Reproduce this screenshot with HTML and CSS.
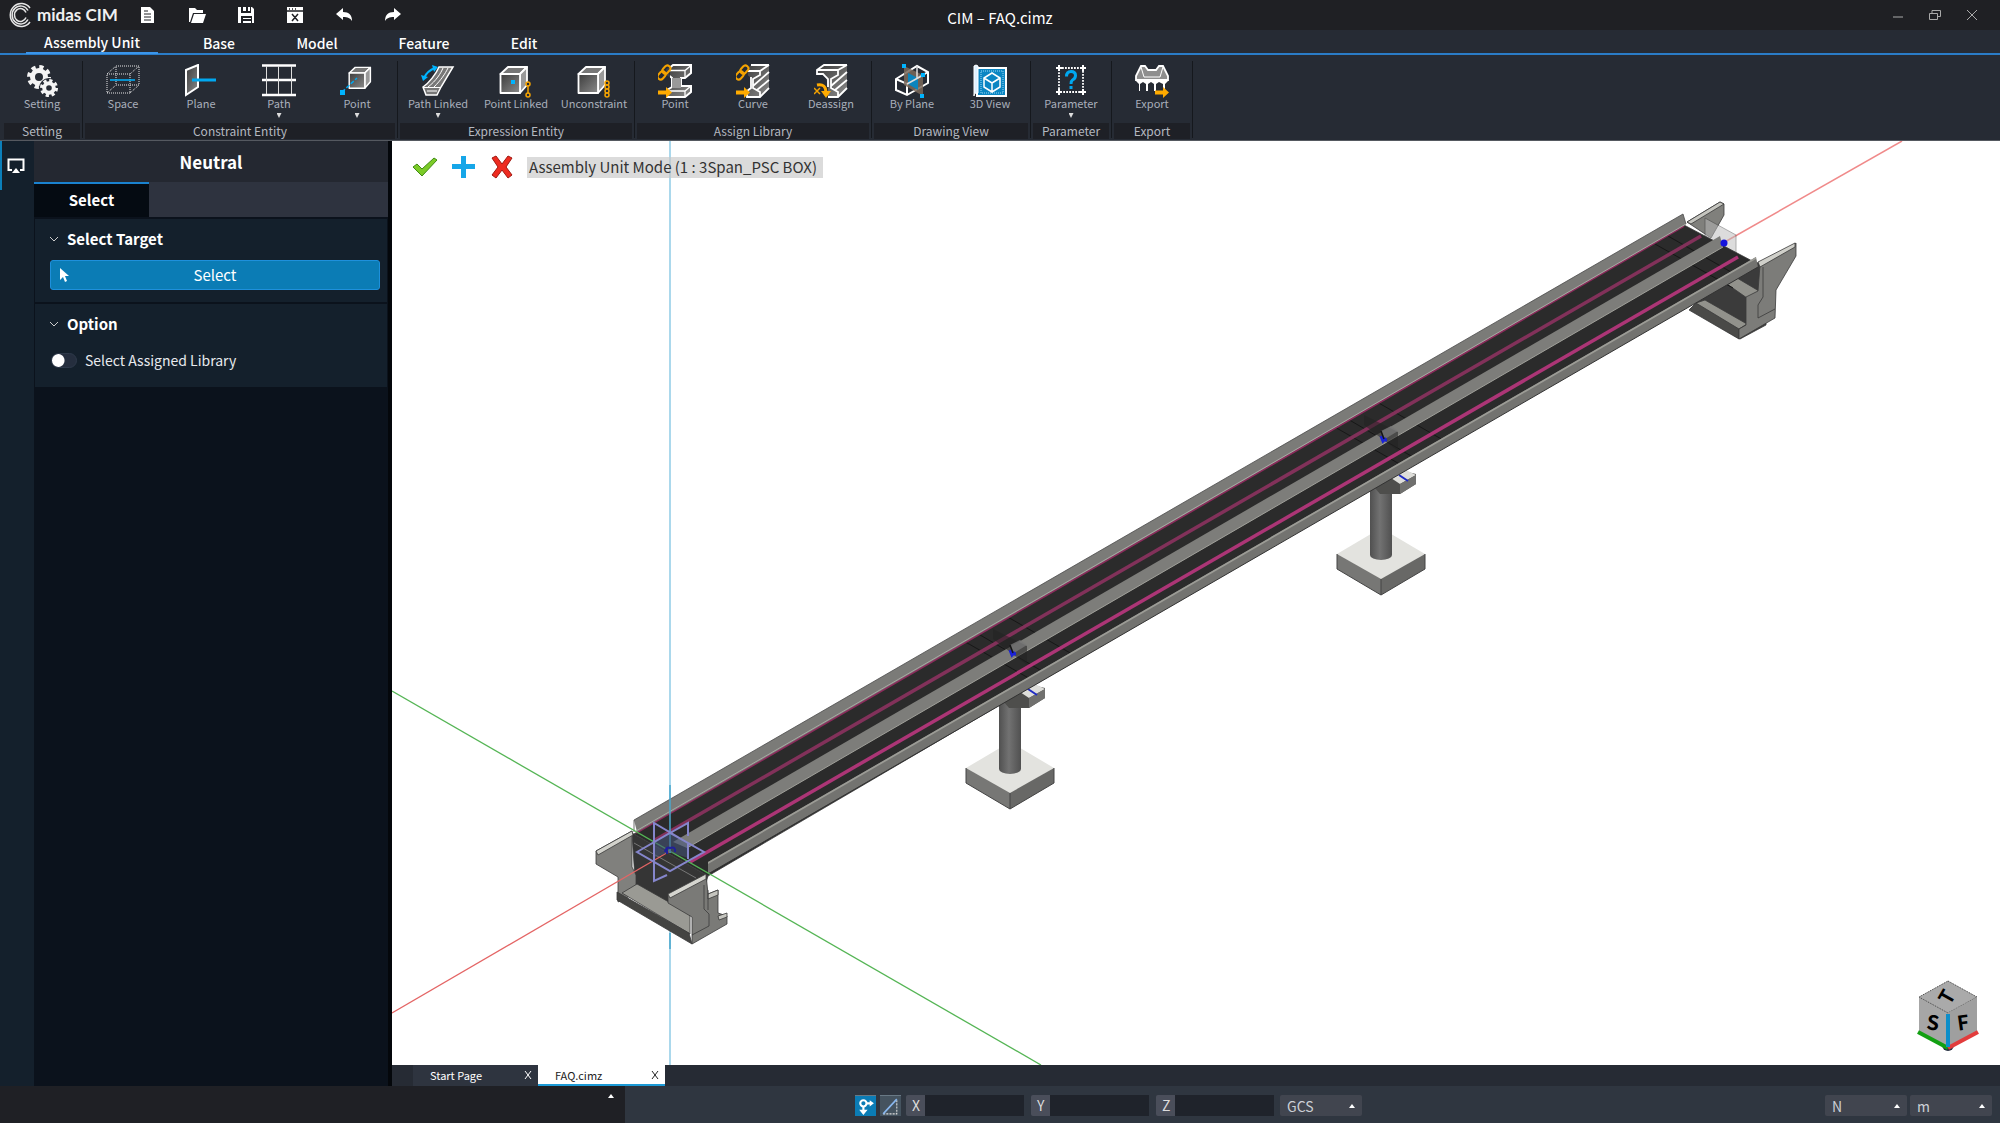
FILE: index.html
```html
<!DOCTYPE html>
<html lang="en">
<head>
<meta charset="utf-8">
<title>CIM – FAQ.cimz</title>
<link rel="stylesheet" href="styles.css">
</head>
<body>
<svg class="defs" aria-hidden="true">
  <defs>
    <linearGradient id="steel" x1="0" y1="0" x2="1" y2="1"><stop offset="0" stop-color="#3c3c3c"/><stop offset="1" stop-color="#8a8a8a"/></linearGradient>
    <linearGradient id="column" x1="0" y1="0" x2="1" y2="0"><stop offset="0" stop-color="#505050"/><stop offset=".45" stop-color="#727272"/><stop offset="1" stop-color="#505050"/></linearGradient>
    <g id="cubebox" stroke="#fff" stroke-width="1.8" stroke-linejoin="round">
      <path d="M1.500 10 9 3h19l-7 7z" fill="#777"/><path d="M21 10l7-7v18l-7 8z" fill="#999"/><path d="M1.500 10H21v19H1.500z" fill="url(#steel)"/>
    </g>
    <g id="arrow"><path d="M0 26.500h8V23l6 5.500L8 34v-3.500H0z" fill="#ffab00"/></g>
    <g id="link" fill="none" stroke="#f5a300" stroke-width="2"><rect x="-1" y="8" width="9" height="6" rx="3" transform="rotate(-48 4 11)"/><rect x="4" y="3" width="9" height="6" rx="3" transform="rotate(-48 8 6)"/></g>
    <g id="pier">
      <path d="M966 768l44-26 44 26-44 26z" fill="#e3e3df"/>
      <path d="M966 768v15l44 26v-16z" fill="#777775"/>
      <path d="M1010 793v16l44-26v-15z" fill="#686866"/>
      <path d="M966 768v15l44 26 44-26v-15M1010 793v16" fill="none" stroke="#444"/>
      <path d="M999 690h22v79a11 5 0 0 1-22 0z" fill="url(#column)"/>
      <path d="M998 695l22-13 25 6v10l-16 10h-20z" fill="#4e4e4c"/>
      <path d="M1020 692l15-8 10 5-16 9z" fill="#dededa"/>
      <path d="M1029 698l16-9v9l-16 10z" fill="#70706e"/>
      <path d="M1028 689l9 6" stroke="#1f2bc4" stroke-width="2"/>
    </g>
    <g id="seams" stroke="#171717" fill="none"><path d="M962 640l70 40M975 632l72 42M1006 616l66 38"/></g>
    <g id="joint">
      <path d="M993 629v10l34 26v-19z" fill="#222" opacity=".55"/>
      <path d="M1010 645l10-5 7 5-13 8z" fill="#777" opacity=".8"/>
      <path d="M1010 650l2 5 3-3M1011 654h5" stroke="#1a22d8" stroke-width="3" fill="none"/>
      <path d="M1010 645l3 8" stroke="#161616" stroke-width="1.500"/>
    </g>
  </defs>
</svg>

<header class="titlebar">
  <div class="brand">
    <svg width="24" height="26" viewBox="0 0 24 26" fill="none" stroke="#e6e6e6" stroke-width="1.500">
      <path d="M22 6A11 11.500 0 1 0 22 20"/><path d="M20 8.500A8.500 9 0 1 0 20 17.500"/><path d="M18 10.500A6 6.500 0 1 0 18 15.500"/>
    </svg>
    <span>midas CIM</span>
  </div>
  <nav class="quick" aria-label="Quick access">
    <button aria-label="New"><svg viewBox="0 0 18 18"><path fill="#fff" d="M2 1h9l4 4v12H2z"/><path d="M5 5h4M5 8h7M5 11h7M5 14h7" stroke="#1f2024"/></svg></button>
    <button aria-label="Open"><svg viewBox="0 0 18 18"><path fill="#fff" d="M1 2h6l2 2h6v3H5l-3 9H1zM6 8h12l-3 9H3z"/></svg></button>
    <button aria-label="Save"><svg viewBox="0 0 18 18"><path fill="#fff" d="M1 1h3v6h10V1h1l2 2v14h-2v-7H4v7H1zM6 1h3v4H6zM11 1h2v4h-2zM6 12h8v1H6zM6 15h8v2H6z"/></svg></button>
    <button aria-label="Close file"><svg viewBox="0 0 18 18"><path fill="#fff" d="M1 1h16v16H1z"/><path d="M1 5h16M3 3h1M6 3h1M9 3h1M6 8l6 7M12 8l-6 7" stroke="#1f2024" stroke-width="1.500"/></svg></button>
    <button aria-label="Undo"><svg viewBox="0 0 18 18"><path fill="#fff" d="M1 8l7-6v4c6 0 9 3 9 9-2-3-4-4-9-4v3z"/></svg></button>
    <button aria-label="Redo"><svg viewBox="0 0 18 18"><path fill="#fff" d="M17 8l-7-6v4c-6 0-9 3-9 9 2-3 4-4 9-4v3z"/></svg></button>
  </nav>
  <h1>CIM – FAQ.cimz</h1>
  <div class="window">
    <button aria-label="Minimize"><svg viewBox="0 0 12 12"><path d="M1 8h10"/></svg></button>
    <button aria-label="Restore"><svg viewBox="0 0 12 12"><path d="M.5 4.500h8v6h-8zM3 4V1.500h8.500v6H9"/></svg></button>
    <button aria-label="Close"><svg viewBox="0 0 12 12"><path d="M1 1l10 10M11 1L1 11"/></svg></button>
  </div>
</header>

<nav class="menu">
  <button class="active">Assembly Unit</button><button>Base</button><button>Model</button><button>Feature</button><button>Edit</button>
</nav>

<div class="ribbon">
  <section class="group">
    <div class="tools">
      <button><svg viewBox="0 0 34 34"><g fill="none" stroke="#f4f4f4"><circle cx="14" cy="13" r="6.500" stroke-width="5"/><circle cx="14" cy="13" r="10" stroke-width="4" stroke-dasharray="4.200 3.650"/></g><circle cx="24" cy="24" r="10" fill="#262b34"/><g fill="none" stroke="#f4f4f4"><circle cx="24" cy="24" r="4.800" stroke-width="4"/><circle cx="24" cy="24" r="7.500" stroke-width="3" stroke-dasharray="3.200 2.690"/></g></svg><span>Setting</span></button>
    </div>
    <h2>Setting</h2>
  </section>
  <section class="group">
    <div class="tools">
      <button><svg viewBox="0 0 34 34" fill="none"><path d="M1 10h23v19H1zM10 2h23v19H10zM1 10l9-8M24 10l9-8M24 29l9-8M1 29l9-8" stroke="#e8e8e8" stroke-dasharray="1 1"/><path d="M4 16h25" stroke="#00b4ff" stroke-width="1.500"/></svg><span>Space</span></button>
      <button><svg viewBox="0 0 34 34"><path d="M2 6l12-5v22L2 31z" fill="url(#steel)" stroke="#fff" stroke-width="2"/><path d="M8 16h24" stroke="#00a8f0" stroke-width="3"/></svg><span>Plane</span></button>
      <button><svg viewBox="0 0 34 34"><path d="M0 1.500h34M0 16h34M0 31h34" stroke="#fff" stroke-width="2.500"/><path d="M4.500 2v28M16.500 2v28M29.500 2v28" stroke="#ddd"/></svg><span>Path</span><i></i></button>
      <button><svg viewBox="0 0 34 34"><g transform="translate(8 1) scale(.8)"><use href="#cubebox"/></g><path d="M2 28l15-14" stroke="#00a8f0" stroke-width="1.500" stroke-dasharray="4 2"/><path d="M0 26h5v5H0z" fill="#00b4ff"/></svg><span>Point</span><i></i></button>
    </div>
    <h2>Constraint Entity</h2>
  </section>
  <section class="group">
    <div class="tools">
      <button><svg viewBox="0 0 34 34"><path d="M18 3h14L20 23l-4 8H5l-3-8C8 19 15 10 18 3z" fill="#777" stroke="#fff" stroke-width="1.500"/><path d="M7 23C15 17 20 9 22 4M13 23C20 16 24 10 27 4M2 23.500h18M6 27h10" stroke="#fff" fill="none"/><path d="M3 14Q6 7 14 4" stroke="#00b4ff" stroke-width="2" fill="none"/><path d="M0 11l2 6 5-4zM11 1l6 2-4 5z" fill="#00b4ff"/></svg><span>Path Linked</span><i></i></button>
      <button><svg viewBox="0 0 34 34"><use href="#cubebox"/><path d="M12 16h4v4h-4z" fill="#00b4ff"/><g fill="#262b34" stroke="#f5a300" stroke-width="1.500"><path d="M29 21v9"/><circle cx="29" cy="20" r="2"/><circle cx="29" cy="31" r="2"/></g></svg><span>Point Linked</span></button>
      <button><svg viewBox="0 0 34 34"><use href="#cubebox"/><g fill="#262b34" stroke="#f5a300" stroke-width="1.500"><circle cx="30" cy="19" r="2"/><circle cx="30" cy="23" r="2"/><circle cx="30" cy="27" r="2"/><circle cx="30" cy="31" r="2"/></g></svg><span>Unconstraint</span></button>
    </div>
    <h2>Expression Entity</h2>
  </section>
  <section class="group">
    <div class="tools">
      <button><svg viewBox="0 0 34 34"><path d="M9 6l6-5h18v8l-6 5h-4v8h10v6l-6 5H9v-7l5-3V14l-5-4z" fill="url(#steel)" stroke="#fff" stroke-width="2"/><path d="M14 14h9v10h-9z" fill="#999"/><path d="M9 6.500h18l6-5M27 7v7M9 27h18l6-5M27 27v6" stroke="#fff" stroke-width="1.300" fill="none"/><path d="M0 0h12v14H0z" fill="#262b34" opacity=".9"/><use href="#link"/><use href="#arrow"/></svg><span>Point</span></button>
      <button><svg viewBox="0 0 34 34"><path d="M9 7l6-6h18v23l-9 9H11v-6l3-2V13L9 9z" fill="url(#steel)"/><path d="M33 1H15M10 7h14l9-6M24 7v4l-7 4v9l7 4v5M33 8L17 22M33 16L21 26M33 24l-9 9H11v-6l4-3V13" stroke="#fff" stroke-width="1.800" fill="none"/><path d="M0 0h12v13H0z" fill="#262b34" opacity=".9"/><use href="#link"/><use href="#arrow"/></svg><span>Curve</span></button>
      <button><svg viewBox="0 0 34 34"><path d="M3 6l7-5h23v23l-9 9H14v-8l-2-14H3z" fill="url(#steel)"/><path d="M33 1H10L3 6v4h6l5 5v8M3 6h21l9-5M24 6v5l-7 4v9l7 4v5M33 8L17 22M33 16L21 26M33 24l-9 9H14" stroke="#fff" stroke-width="1.800" fill="none"/><path d="M0 24l6 6M6 24l-6 6" stroke="#f5a300" stroke-width="1.500"/><path d="M3 21q9-2 9 8" stroke="#ffab00" stroke-width="3" fill="none"/><path d="M7 27h10l-5 7z" fill="#ffab00"/></svg><span>Deassign</span></button>
    </div>
    <h2>Assign Library</h2>
  </section>
  <section class="group">
    <div class="tools">
      <button><svg viewBox="0 0 34 34"><path d="M1 15L22 2l11 6v11L12 31 1 26zM1 15l11 5L33 8M12 20v11" fill="none" stroke="#fff" stroke-width="2"/><path d="M9 2l19 9v21L9 21z" fill="#7a6a5c" opacity=".85"/><path d="M13 9l10 5v12l-10-6z" fill="#0a84bd"/><path d="M12 20L30 10M22 2v12" stroke="#ddd" stroke-width="1.500"/><path d="M7 0h4v4H7zM26 9h4v4h-4zM25 30h4v4h-4z" fill="#00b4ff"/></svg><span>By Plane</span></button>
      <button><svg viewBox="0 0 34 34"><path d="M4 4h29v28H4z" fill="#0b86c3" stroke="#fff" stroke-width="2"/><path d="M8 7h22v22H8z" fill="none" stroke="#9bd8f5" stroke-dasharray="1 1"/><path d="M1 2q2-2 4 0v27H3q-2 0-2 3z" fill="#dff1ff" stroke="#fff"/><path d="M19 9l8 5v9l-8 5-8-5v-9zM11 14l8 5 8-5M19 19v9" fill="none" stroke="#fff" stroke-width="1.500"/></svg><span>3D View</span></button>
    </div>
    <h2>Drawing View</h2>
  </section>
  <section class="group">
    <div class="tools">
      <button><svg viewBox="0 0 34 34"><path d="M5 4h24v24H5z" fill="none" stroke="#fff" stroke-width="1.800" stroke-dasharray="1.800 1.200"/><path d="M2 4h6M5 1v6M26 4h6M29 1v6M2 28h6M5 25v6M26 28h6M29 25v6" stroke="#fff" stroke-width="2"/><path d="M12.500 12.500q0-5 4.500-5t4.500 4q0 3-3 4.500-1.500 1-1.500 4M17 22v3" fill="none" stroke="#00a8f0" stroke-width="3"/></svg><span>Parameter</span><i></i></button>
    </div>
    <h2>Parameter</h2>
  </section>
  <section class="group">
    <div class="tools">
      <button><svg viewBox="0 0 34 34"><path d="M1 12L6 2h4l3 4h8l3-4h4l5 10v4H1z" fill="#8e8e8e" stroke="#fff" stroke-width="1.800"/><path d="M6 3l3 10h16l3-10M1 16h32" stroke="#fff" fill="none"/><path d="M1 17h32l-3 3v7h-2v-7l-4-2-3 2v7h-2v-7l-3-2-3 2v7h-2v-7l-3-2-3 2v7H4v-7z" fill="#fff"/><use href="#arrow" x="20"/></svg><span>Export</span></button>
    </div>
    <h2>Export</h2>
  </section>
</div>

<main class="work">
  <nav class="rail"><button aria-label="Display"><svg width="18" height="16" viewBox="0 0 18 16"><path d="M5 12H1.500V1.500h15V12H13" fill="none" stroke="#fff" stroke-width="2"/><path d="M5 15l4-5 4 5z" fill="#fff"/></svg></button></nav>
  <aside class="panel">
    <h2>Neutral</h2>
    <div class="paneltabs"><button>Select</button></div>
    <section class="block">
      <h3><svg viewBox="0 0 8 6"><path d="M0 1l4 4 4-4"/></svg>Select Target</h3>
      <button class="pick"><svg width="12" height="16" viewBox="0 0 12 16"><path d="M1 1v12l3-3 2 5 2-1-2-5h4z" fill="#fff"/></svg><span>Select</span></button>
    </section>
    <section class="block">
      <h3><svg viewBox="0 0 8 6"><path d="M0 1l4 4 4-4"/></svg>Option</h3>
      <label class="toggle"><input type="checkbox">Select Assigned Library</label>
    </section>
  </aside>

  <div class="stage">
    <div class="canvas">
      <svg class="scene" viewBox="392 141 1608 924" preserveAspectRatio="xMinYMin slice">
        <path d="M670 141v924" stroke="#8fcbe6" stroke-width="1.500"/>
        <path d="M1723 243L1902 141" stroke="#f08a8a" stroke-width="1.500"/>
        <use href="#pier"/><use href="#pier" x="371" y="-214"/>
        <g stroke="#3a3a3a" stroke-width=".8" stroke-linejoin="round">
          <path d="M1687 222l33-20 4 2v11l-13 23z" fill="#80807c"/>
          <path d="M1687 222l33-20 4 2-33 20z" fill="#c5c5bf"/>
          <path d="M1705 218l31 17v18l-31-17z" fill="#bbb" opacity=".5"/>
          <path d="M1690 309l8-7 50-35 18-8v66l-26 14z" fill="#3b3b3b"/>
          <path d="M1689 310l8-8 42 25v12z" fill="#4a4a48"/>
          <path d="M1696 303l9-3 42 24-8 5z" fill="#92928c"/>
          <path d="M1727 284l10-6 22 13-1 4-11 3z" fill="#92928c"/>
          <path d="M1746 297l12-6 2-26 36-22v13l-20 34-1 28-36 21v-10l7-4z" fill="#7c7c79"/>
          <path d="M1758 262l37-19v4l-35 20z" fill="#d0d0ca"/>
          <path d="M1763 267v30l-5 8v13l17-9" fill="none"/>
          <path d="M634 834L1684 225l72 38-48 27L708 876z" fill="#2b2b2b"/>
        </g>
        <g fill="none">
          <use href="#seams"/><use href="#seams" x="371" y="-214"/>
          <path d="M1655 244l78 44M1668 236l70 40" stroke="#171717"/>
          <path d="M636 833L1684 226" stroke="#8c2b5c" stroke-width="2"/>
          <path d="M655 840L1701 236" stroke="#82315a" stroke-width="3.500"/>
          <path d="M690 862L1738 257" stroke="#ac3576" stroke-width="3.500"/>
        </g>
        <path d="M673 842L1720 236l3 11L687 848z" fill="#7d7d7a"/>
        <path d="M687 848L1723 247" stroke="#a0a09a"/>
        <path d="M634 820L1683 214l3 10L637 832z" fill="#7b7b78"/>
        <path d="M636 831L1686 224" stroke="#a8a8a2"/>
        <path d="M634 832v-12L1683 214l3 10" fill="none" stroke="#4a4a4a" stroke-width=".8"/>
        <path d="M708 862L1756 257l2 10L708 874z" fill="#737370"/>
        <path d="M708 862L1756 257v2L708 864z" fill="#9c9c96"/>
        <path d="M708 874L1758 267" stroke="#333" fill="none"/>
        <use href="#joint"/><use href="#joint" x="371" y="-214"/>
        <circle cx="1724" cy="243" r="3.500" fill="#1514dd"/>
        <g stroke="#3a3a3a" stroke-width=".8" stroke-linejoin="round">
          <path d="M632 833l76 43-3 10-35 22v8l-34-20z" fill="#353535"/>
          <path d="M596 851l36-20v36l4 8v18l-18 9v-25l-22-13z" fill="#80807d"/>
          <path d="M596 851l36-20 1 4-35 20z" fill="#d2d2cc"/>
          <path d="M622 893l15-9 53 30v20z" fill="#9a9a94"/>
          <path d="M617 892l72 41 3 11-75-44z" fill="#444442"/>
          <path d="M668 894l38-20 2 20 10-4v23l9 3v8l-35 20v-27l-24-14z" fill="#7a7a77"/>
          <path d="M668 894l38-20v5l-36 19z" fill="#d5d5cf"/>
          <path d="M708 894l10-4v5l-10 4zM718 916l9-3v4l-8 3z" fill="#c5c5bf"/>
          <path d="M704 885v24l5 5v12l-17 9M708 890v20" fill="none"/>
        </g>
        <path d="M634 843l62 35" stroke="#777" fill="none"/>
        <path d="M392 691l649 374" stroke="#55b555" stroke-width="1.300"/>
        <path d="M392 1013l278-162" stroke="#e46565" stroke-width="1.300"/>
        <path d="M670 785v68M670 933v16" stroke="#4aa6cc" stroke-width="1.500"/>
        <g fill="none" stroke="#8586cc" stroke-width="2">
          <path d="M653 843l17-10 18 10v15l-18-6-17 6z" fill="#45557c" stroke="none" opacity=".55"/>
          <path d="M637 852l33-19 34 19-34 19zM667 875l-13 6v-58l34 20M688 836v-13l-34 19M688 843v16"/>
        </g>
        <path d="M665 852q1-6 5-4 6-2 5 4M667 848v6" stroke="#20209c" stroke-width="2" fill="none"/>
      </svg>
      <div class="mode">
        <button aria-label="Apply"><svg width="26" height="20" viewBox="0 0 26 20"><path d="M1 10l4-3 5 5L22 1l3 2-15 16z" fill="#7ccb28" stroke="#3f8b12"/></svg></button>
        <button aria-label="Add"><svg width="26" height="24" viewBox="0 0 26 24"><path d="M10 1h5v8h9v5h-9v9h-5v-9H1V9h9z" fill="#16a6e8"/></svg></button>
        <button aria-label="Cancel"><svg width="24" height="24" viewBox="0 0 24 24"><path d="M2 3l4-2 6 8 6-8 4 2-6 9 6 8-4 3-6-8-6 8-4-3 6-8z" fill="#ee2b20" stroke="#a01810"/></svg></button>
        <output>Assembly Unit Mode (1 : 3Span_PSC BOX)</output>
      </div>
      <svg class="viewcube" width="64" height="74" viewBox="0 0 64 74">
        <circle cx="32" cy="66" r="6" fill="#273142"/>
        <path d="M32 2l29 16v35L32 69 3 53V18z" fill="#a6a6a6"/><path d="M32 2l29 16-29 16L3 18z" fill="#aaa" stroke="#444" stroke-dasharray="1 1"/>
        <path d="M32 34l29-16v35L32 69z" fill="#9f9f9f"/>
        <path d="M2 53l30 16" stroke="#12a012" stroke-width="4"/><path d="M62 53L32 69" stroke="#e23c3c" stroke-width="4"/><path d="M32 35v33" stroke="#0d8ec9" stroke-width="4"/>
        <text x="17" y="51" transform="rotate(8 17 43)">S</text><text x="47" y="51" transform="rotate(-8 47 43)">F</text><text x="31" y="25" transform="rotate(-60 31 18)">T</text>
      </svg>
    </div>
    <div class="doctabs">
      <button>Start Page<svg viewBox="0 0 8 8"><path d="M1 0l6 8M7 0L1 8"/></svg></button>
      <button class="current">FAQ.cimz<svg viewBox="0 0 8 8"><path d="M1 0l6 8M7 0L1 8"/></svg></button>
    </div>
  </div>
</main>

<footer class="status">
  <div class="log"><button aria-label="Expand log"></button></div>
  <form class="coords">
    <button type="button" class="snap on" aria-label="Snap"><svg viewBox="0 0 20 20"><g fill="none" stroke="#fff" stroke-width="2"><circle cx="8" cy="7" r="3"/><path d="M8 10v5M11 7h4"/></g><path d="M14 4l4 3-4 3zM4 13h8l-4 5z" fill="#fff"/></svg></button>
    <button type="button" class="snap" aria-label="Angle"><svg viewBox="0 0 20 20" fill="none"><path d="M3 17h13V4" stroke="#ddd" stroke-dasharray="2 1"/><path d="M3 17L16 3" stroke="#8ab8f0" stroke-width="1.500"/></svg></button>
    <label>X<input type="text"></label><label>Y<input type="text"></label><label>Z<input type="text"></label>
    <span class="drop"><select aria-label="Coordinate system"><option>GCS</option></select></span>
  </form>
  <div class="units">
    <span class="drop"><select aria-label="Force unit"><option>N</option></select></span>
    <span class="drop"><select aria-label="Length unit"><option>m</option></select></span>
  </div>
</footer>
</body>
</html>
```
FILE: styles.css
```css
* { box-sizing: border-box; }
body {
  margin: 0;
  height: 100vh;
  display: flex;
  flex-direction: column;
  background: #262b34;
  color: #fff;
  font-family: "Noto Sans CJK KR", "Noto Sans", sans-serif;
  font-size: 14px;
  line-height: 20px;
}
button, input, select { font: inherit; color: inherit; border: 0; padding: 0; margin: 0; background: none; }
h1, h2, h3 { margin: 0; font-weight: 400; font-size: inherit; }
svg { display: block; flex: none; }
.defs { position: absolute; width: 0; height: 0; }

.titlebar { display: grid; grid-template-columns: 139px 1fr auto 1fr 139px; align-items: center; height: 30px; background: #1f2024; }
.brand { display: flex; align-items: center; gap: 5px; padding-left: 8px; font-family: Lato, sans-serif; font-weight: 700; font-size: 17px; color: #f0f0f0; }
.quick { display: flex; gap: 31px; }
.quick button { width: 18px; height: 18px; }
.titlebar h1 { font-size: 15px; padding-top: 5px; }
.window { grid-column: 5; display: flex; justify-content: flex-end; gap: 25px; padding-right: 22px; }
.window button { width: 12px; height: 12px; }
.window path { fill: none; stroke: #aaa; stroke-width: 1; }

.menu { display: flex; height: 25px; padding-left: 26px; border-bottom: 2px solid #2a7cc7; }
.menu button { width: 98px; padding-top: 2px; font-size: 14px; font-weight: 500; line-height: 20px; height: 24px; }
.menu .active { width: 132px; border-bottom: 2px solid #3a95ea; }
.menu .active + button { margin-left: 12px; }
.menu button:nth-child(4) { width: 116px; }
.menu button:nth-child(5) { width: 84px; }

.ribbon { display: flex; height: 86px; padding: 6px 0 2px 2px; border-bottom: 1px solid #555960; }
.group { display: flex; flex-direction: column; justify-content: space-between; padding: 0 1px; border-right: 1px solid #15181d; }
.tools { display: flex; }
.tools button { width: 78px; height: 62px; padding-top: 3px; display: flex; flex-direction: column; align-items: center; font-size: 11px; line-height: 11px; color: #a9afbb; }
.tools svg { width: 34px; height: 34px; }
.tools i { width: 5px; height: 5px; margin-top: 4px; background: #ddd; clip-path: polygon(0 0, 100% 0, 50% 100%); }
.group h2 { margin: 0 1px; height: 16px; line-height: 16px; font-size: 12px; text-align: center; color: #b4b8c0; background: #1e2026; }

.work { flex: 1; min-height: 0; display: flex; }
.rail { width: 34px; background: #14202c; }
.rail button { width: 100%; height: 49px; padding-left: 5px; border-left: 2px solid #0b7fba; }
.panel { width: 358px; background: #0b121c; border-right: 4px solid #04070b; }
.panel h2 { height: 41px; line-height: 42px; font-size: 17px; font-weight: 700; text-align: center; background: #242831; }
.paneltabs { height: 35px; background: #2e333f; }
.paneltabs button { width: 115px; height: 35px; padding-bottom: 2px; background: #050b12; border-top: 2px solid #1a82cf; font-size: 15px; font-weight: 700; }
.block { height: 83px; margin: 2px 1px 0; padding: 10px 7px 0 15px; background: #14202c; }
.block h3 { display: flex; align-items: center; gap: 9px; font-size: 15px; font-weight: 700; }
.block h3 svg { width: 8px; height: 6px; overflow: visible; fill: none; stroke: #ccc; stroke-width: 1; }
.pick { display: grid; grid-template-columns: 12px 1fr 12px; align-items: center; width: 100%; height: 30px; margin-top: 11px; padding: 0 8px; border: 1px solid #1e90dc; border-radius: 3px; background: #0b7cb5; font-size: 15px; line-height: 18px; }
.toggle { display: flex; align-items: center; gap: 8px; margin-top: 16px; padding-left: 1px; font-size: 14px; line-height: 20px; color: #e8eaee; }
.toggle input { appearance: none; width: 26px; height: 15px; border-radius: 8px; border: 1px solid #2e394a; background: radial-gradient(circle at 6px 50%, #fff 6px, transparent 7px) #252e3e; }

.stage { flex: 1; min-width: 0; display: flex; flex-direction: column; }
.canvas { position: relative; flex: 1; min-height: 0; background: #fff; }
.scene { position: absolute; width: 100%; height: 100%; }
.mode { position: relative; display: flex; align-items: center; gap: 13px; padding: 14px 0 0 20px; color: #333; }
.mode output { height: 21px; padding: 0 6px 0 2px; line-height: 20px; font-size: 15px; background: rgba(200, 200, 200, .65); }
.viewcube { position: absolute; right: 20px; bottom: 12px; }
.viewcube text { font-size: 20px; font-weight: 700; text-anchor: middle; }
.doctabs { display: flex; height: 21px; padding-left: 21px; background: #262b34; }
.doctabs button { display: flex; align-items: center; justify-content: space-between; width: 125px; padding: 1px 6px 0 17px; background: #2e343f; font-size: 11px; line-height: 18px; border-bottom: 2px solid #2e343f; }
.doctabs .current { width: 127px; background: #fff; color: #222; border-color: #1c9ad6; }
.doctabs svg { width: 8px; height: 8px; fill: none; stroke: currentColor; stroke-width: 1; }

.status { display: flex; align-items: flex-start; height: 37px; background: #2f3640; }
.log { width: 625px; height: 37px; display: flex; justify-content: flex-end; padding: 8px 11px; background: #1f2025; }
.log button { width: 6px; height: 4px; background: #fff; clip-path: polygon(50% 0, 100% 100%, 0 100%); }
.coords { flex: 1; display: flex; padding: 9px 0 0 230px; }
.snap { width: 21px; height: 21px; margin-right: 4px; background: #45535f; border-top: 1px solid #697985; }
.snap.on { background: #0b7cb5; }
.coords label { display: flex; width: 118px; height: 21px; margin: 0 6px 0 1px; background: #4a4e5a; border-radius: 2px; color: #ddd; font-size: 14px; line-height: 20px; text-indent: 6px; }
.coords input { width: 99px; margin-left: auto; background: #1f232b; }
.drop { position: relative; display: block; width: 82px; height: 21px; }
.drop::after { content: ""; position: absolute; right: 7px; top: 9px; width: 6px; height: 4px; background: #fff; clip-path: polygon(50% 0, 100% 100%, 0 100%); }
.drop select { appearance: none; width: 100%; height: 100%; padding-left: 7px; background: #41454f; border-radius: 2px; font-size: 14px; line-height: 20px; color: #ccd0d6; }
.units { display: flex; gap: 3px; padding: 9px 8px 0 0; }
```
